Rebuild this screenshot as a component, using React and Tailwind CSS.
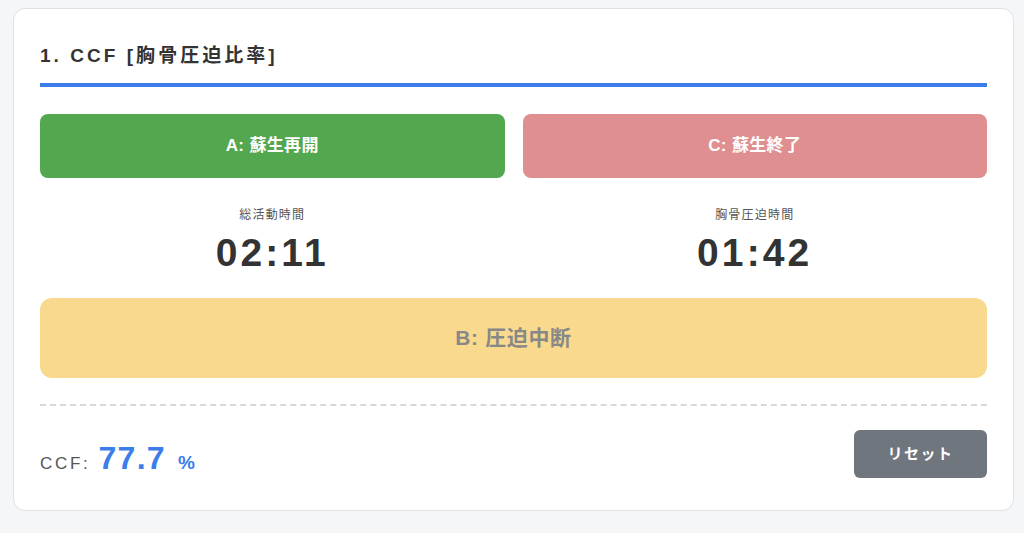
import React from "react";

export default function App() {
  const font = { fontFamily: '"Liberation Sans", "Noto Sans CJK JP", sans-serif' };

  return (
    <div className="min-h-screen bg-[#f5f6f8] pl-[13px] pr-[10px] pt-[8px]" style={font}>
      <div className="flex flex-col rounded-xl border border-[#dfe1e5] bg-white px-[26px] pt-[32px] pb-[32px]">
        <h2 className="text-[19px] font-bold leading-[30px] tracking-[0.16em] text-[#333]">
          1. CCF [胸骨圧迫比率]
        </h2>
        <div className="mt-[12px] h-[4px] bg-[#3b7eea]" />

        <div className="mt-[27px] grid grid-cols-2 gap-[18px]">
          <button className="h-[64px] rounded-lg bg-[#53a74f] text-[17px] font-bold tracking-[0.02em] text-white">
            A: 蘇生再開
          </button>
          <button className="h-[64px] rounded-lg bg-[#e08f91] text-[17px] font-bold tracking-[0.02em] text-white">
            C: 蘇生終了
          </button>
        </div>

        <div className="mt-[28px] grid grid-cols-2 gap-[18px]">
          <div className="flex flex-col items-center">
            <span className="text-[12px] leading-[18px] tracking-[0.1em] text-[#555]">総活動時間</span>
            <span className="mt-[6px] text-[39px] font-bold leading-[46px] tracking-[0.08em] text-[#333]">02:11</span>
          </div>
          <div className="flex flex-col items-center">
            <span className="text-[12px] leading-[18px] tracking-[0.1em] text-[#555]">胸骨圧迫時間</span>
            <span className="mt-[6px] text-[39px] font-bold leading-[46px] tracking-[0.08em] text-[#333]">01:42</span>
          </div>
        </div>

        <button className="mt-[22px] h-[80px] rounded-xl bg-[#f8d98d] text-[21px] font-bold tracking-[0.03em] text-[#888]">
          B: 圧迫中断
        </button>

        <div className="mt-[26px] border-t-2 border-dashed border-[#d8d8d8]" />

        <div className="mt-[24px] flex h-[48px] items-center justify-between">
          <div className="mt-[8px] flex h-[40px] items-baseline leading-[40px]">
            <span className="text-[17px] tracking-[0.16em] text-[#555]">CCF:</span>
            <span className="ml-[8px] text-[32px] font-bold tracking-[0.04em] text-[#3b7eea]">77.7</span>
            <span className="ml-[12px] text-[19px] font-bold text-[#3b7eea]">%</span>
          </div>
          <button className="h-[48px] w-[133px] rounded-md bg-[#6f767e] text-[15px] font-bold tracking-[0.1em] text-white">
            リセット
          </button>
        </div>
      </div>
    </div>
  );
}
